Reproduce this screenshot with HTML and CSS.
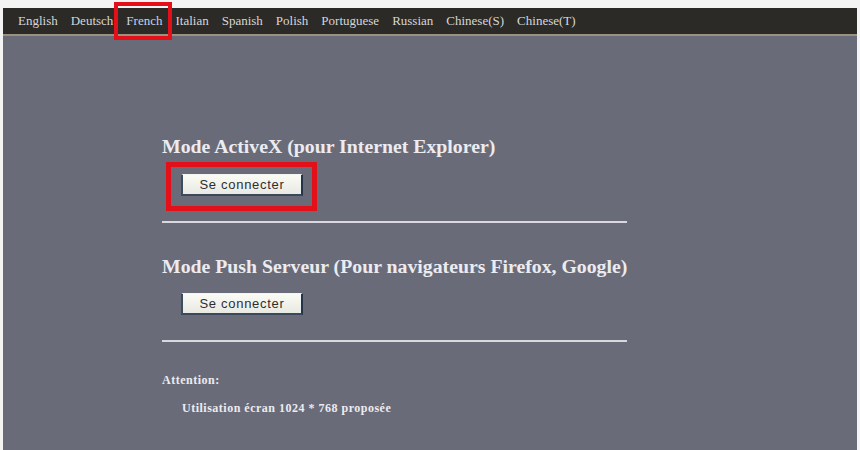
FILE: index.html
```html
<!DOCTYPE html>
<html lang="fr">
<head>
<meta charset="utf-8">
<title>Connexion</title>
<link rel="stylesheet" href="styles.css">
</head>
<body>
<div class="frame">
  <nav class="langbar">
    <a class="lang">English</a>
    <a class="lang">Deutsch</a>
    <a class="lang lang-current">French</a>
    <a class="lang">Italian</a>
    <a class="lang">Spanish</a>
    <a class="lang">Polish</a>
    <a class="lang">Portuguese</a>
    <a class="lang">Russian</a>
    <a class="lang">Chinese(S)</a>
    <a class="lang">Chinese(T)</a>
  </nav>
  <main class="panel">
    <section class="mode">
      <h2 class="mode-title">Mode ActiveX (pour Internet Explorer)</h2>
      <div class="mode-action">
        <span class="mark"><button class="connect" type="button">Se connecter</button></span>
      </div>
    </section>
    <hr class="rule">
    <section class="mode mode-second">
      <h2 class="mode-title">Mode Push Serveur (Pour navigateurs Firefox, Google)</h2>
      <div class="mode-action">
        <button class="connect" type="button">Se connecter</button>
      </div>
    </section>
    <hr class="rule">
    <section class="notice">
      <p class="notice-title">Attention:</p>
      <p class="notice-text">Utilisation écran 1024 * 768 proposée</p>
    </section>
  </main>
</div>
</body>
</html>
```
FILE: styles.css
```css
html, body {
  margin: 0;
  padding: 0;
  background: #f4f4f4;
  height: 100%;
}

.frame {
  box-sizing: border-box;
  height: 100%;
  padding: 8px 3px 0 3px;
  display: flex;
  flex-direction: column;
}

/* language strip */
.langbar {
  height: 26px;
  background: #2b2a27;
  border-bottom: 2px solid #9a927f;
  display: flex;
  align-items: center;
  gap: 13px;
  padding-left: 15px;
  font-family: "Liberation Serif", "Times New Roman", serif;
  font-size: 13px;
}

.lang {
  color: #d6d6d8;
  position: relative;
  white-space: nowrap;
}

.lang-current {
  color: #c8d2e8;
}

.lang-current::after {
  content: "";
  position: absolute;
  left: -12px;
  right: -10px;
  top: -11px;
  bottom: -11px;
  border: 4px solid #e3101a;
}

/* main grey area */
.panel {
  flex: 1;
  background: #6a6b78;
  padding: 100px 0 0 159px;
  font-family: "Liberation Serif", "Times New Roman", serif;
  color: #ececf0;
}

.mode-title {
  margin: 0;
  font-size: 19.8px;
  font-weight: bold;
  line-height: 20px;
}

.mode-action {
  padding: 18px 0 0 19px;
  height: 22px;
}

.mark {
  position: relative;
  display: inline-block;
}

.mark::after {
  content: "";
  position: absolute;
  left: -15px;
  right: -14px;
  top: -12px;
  bottom: -15px;
  border: 5px solid #e3101a;
}

.connect {
  display: block;
  width: 122px;
  height: 22px;
  margin: 0;
  padding: 0;
  font-family: "Liberation Sans", Arial, sans-serif;
  font-size: 13px;
  letter-spacing: 0.7px;
  color: #2e2e2e;
  background: linear-gradient(#fbfbf6, #e9e9e4);
  border: 1px solid #f4f4f0;
  border-right: 2px solid #23344a;
  border-bottom: 2px solid #3a4a5c;
  border-left: 2px solid #3d4d60;
}

.rule {
  width: 465px;
  margin: 25px 0 0 0;
  height: 0;
  border: none;
  border-top: 2px solid #d8d8de;
}

.mode-second .mode-title {
  margin-top: 33px;
}

.mode-second .mode-action {
  padding-top: 17px;
}

.mode-second + .rule {
  margin-top: 25px;
}

.notice {
  margin-top: 31px;
  font-size: 12px;
  font-weight: bold;
  letter-spacing: 0.5px;
  line-height: 14px;
}

.notice-title {
  margin: 0;
}

.notice-text {
  margin: 14px 0 0 20px;
}
```
